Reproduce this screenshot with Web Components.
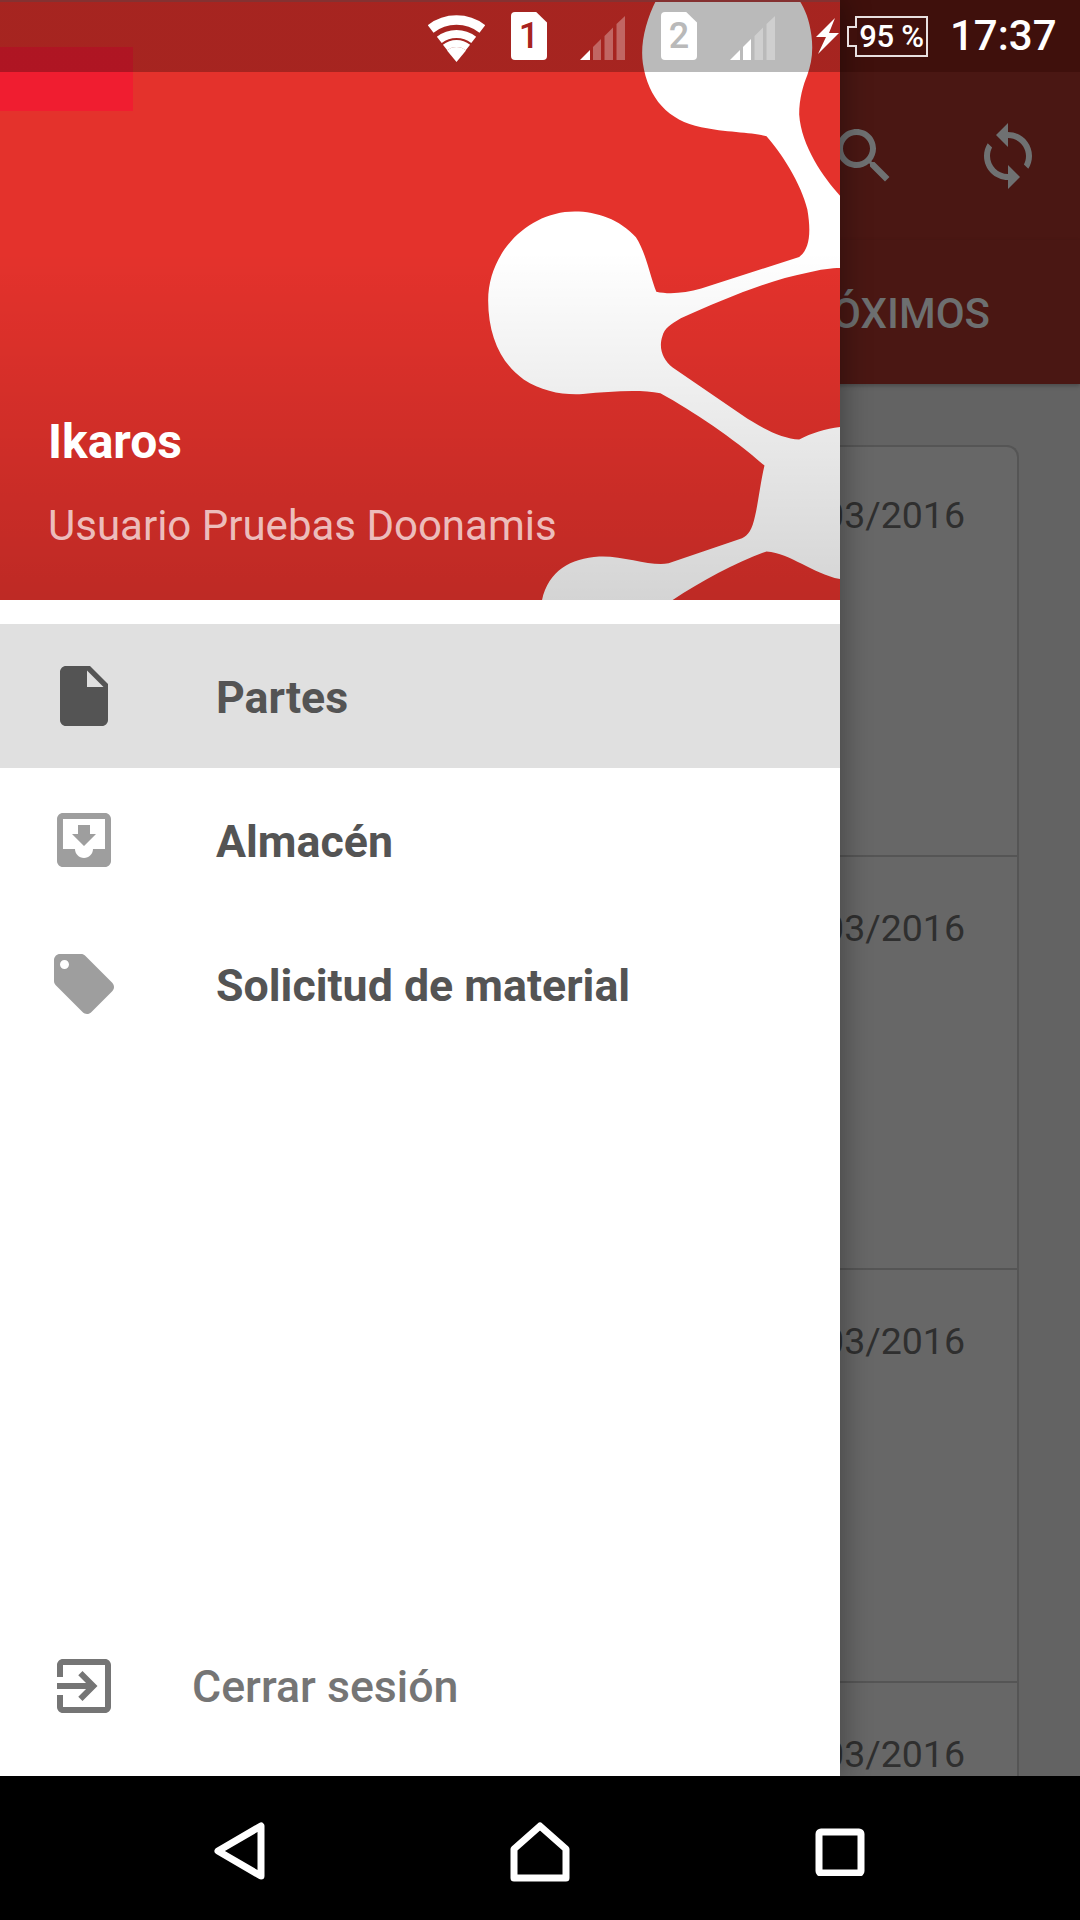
<!DOCTYPE html>
<html lang="es">
<head>
<meta charset="utf-8">
<title>Ikaros</title>
<style>
  html, body { margin: 0; background: #000; }
</style>
</head>
<body>
<phone-screen>
  <back-page slot="page">
    <date-card first>03/2016</date-card>
    <date-card>03/2016</date-card>
    <date-card>03/2016</date-card>
    <date-card>03/2016</date-card>
  </back-page>
  <nav-drawer slot="drawer">
    <drawer-header slot="header" name="Ikaros" user="Usuario Pruebas Doonamis"></drawer-header>
    <drawer-item icon="file" active>Partes</drawer-item>
    <drawer-item icon="inbox">Almacén</drawer-item>
    <drawer-item icon="tag">Solicitud de material</drawer-item>
    <drawer-item slot="footer" icon="exit" plain>Cerrar sesión</drawer-item>
  </nav-drawer>
  <status-bar slot="status"></status-bar>
  <nav-bar slot="nav"></nav-bar>
</phone-screen>

<script>
const ICONS = {
  file: "M6 2c-1.1 0-2 .9-2 2v16c0 1.1.9 2 2 2h12c1.1 0 2-.9 2-2V8l-6-6H6zm7 7V3.5L18.5 9H13z",
  inbox: "M19 3H4.99c-1.11 0-1.98.9-1.98 2L3 19c0 1.1.88 2 1.99 2H19c1.1 0 2-.9 2-2V5c0-1.1-.9-2-2-2zm0 12h-4c0 1.66-1.35 3-3 3s-3-1.34-3-3H4.99V5H19v10zm-3-5h-2V7h-4v3H8l4 4 4-4z",
  tag: "M21.41 11.58l-9-9C12.05 2.22 11.55 2 11 2H4c-1.1 0-2 .9-2 2v7c0 .55.22 1.05.59 1.42l9 9c.36.36.86.58 1.41.58.55 0 1.05-.22 1.41-.59l7-7c.37-.36.59-.86.59-1.41 0-.55-.23-1.06-.59-1.42zM5.5 7C4.67 7 4 6.33 4 5.5S4.67 4 5.5 4 7 4.67 7 5.5 6.33 7 5.5 7z",
  exit: "M10.09 15.59L11.5 17l5-5-5-5-1.41 1.41L12.67 11H3v2h9.67l-2.58 2.59zM19 3H5c-1.11 0-2 .9-2 2v4h2V5h14v14H5v-4H3v4c0 1.1.89 2 2 2h14c1.1 0 2-.9 2-2V5c0-1.1-.9-2-2-2z",
  search: "M15.5 14h-.79l-.28-.27C15.41 12.59 16 11.11 16 9.5 16 5.91 13.09 3 9.5 3S3 5.91 3 9.5 5.91 16 9.5 16c1.61 0 3.09-.59 4.23-1.57l.27.28v.79l5 4.99L20.49 19l-4.99-5zm-6 0C7.01 14 5 11.99 5 9.5S7.01 5 9.5 5 14 7.01 14 9.5 11.99 14 9.5 14z",
  sync: "M12 4V1L8 5l4 4V6c3.31 0 6 2.69 6 6 0 1.01-.25 1.97-.7 2.8l1.46 1.46C19.54 15.03 20 13.57 20 12c0-4.42-3.58-8-8-8zm0 14c-3.31 0-6-2.69-6-6 0-1.01.25-1.97.7-2.8L5.24 7.74C4.46 8.97 4 10.43 4 12c0 4.42 3.58 8 8 8v3l4-4-4-4v3z"
};

class PhoneScreen extends HTMLElement {
  constructor() {
    super();
    this.attachShadow({ mode: "open" });
  }
  connectedCallback() {
    this.shadowRoot.innerHTML = `
      <style>
        :host {
          display: flex;
          flex-direction: column;
          position: relative;
          width: 1080px;
          height: 1920px;
          overflow: hidden;
          background: #000;
          font-family: Roboto, "Liberation Sans", sans-serif;
        }
        .main { position: relative; height: 1776px; overflow: hidden; }
        .over { position: absolute; top: 0; left: 0; }
      </style>
      <div class="main">
        <slot name="page"></slot>
        <div class="over"><slot name="drawer"></slot></div>
        <div class="over"><slot name="status"></slot></div>
      </div>
      <slot name="nav"></slot>
    `;
  }
}

class SimBadge extends HTMLElement {
  constructor() {
    super();
    this.attachShadow({ mode: "open" });
  }
  connectedCallback() {
    this.shadowRoot.innerHTML = `
      <style>
        :host {
          display: flex;
          align-items: center;
          justify-content: center;
          width: 36px;
          height: 48px;
          background: #fff;
          border-radius: 4px;
          clip-path: polygon(0 0, 70% 0, 100% 22%, 100% 100%, 0 100%);
          color: var(--digit, #a82320);
          font: 500 36px/1 Roboto, sans-serif;
        }
      </style>
      ${this.getAttribute("num")}
    `;
  }
}

class SignalBars extends HTMLElement {
  constructor() {
    super();
    this.attachShadow({ mode: "open" });
  }
  connectedCallback() {
    const lit = Number(this.getAttribute("lit") ?? 1);
    const shapes = [
      "0,44 10,34 10,44",
      "13,44 13,31 21,23 21,44",
      "24.5,44 24.5,20 33,11.5 33,44",
      "36.5,44 36.5,8 45,0 45,44"
    ];
    const polys = shapes.map((p, i) =>
      `<polygon points="${p}" fill="#fff" fill-opacity="${i < lit ? 1 : 0.3}"/>`).join("");
    this.shadowRoot.innerHTML = `
      <style>
        :host { display: block; width: 45px; height: 44px; }
        svg { display: block; }
      </style>
      <svg width="45" height="44" viewBox="0 0 45 44">${polys}</svg>
    `;
  }
}

class StatusBar extends HTMLElement {
  constructor() {
    super();
    this.attachShadow({ mode: "open" });
  }
  connectedCallback() {
    this.shadowRoot.innerHTML = `
      <style>
        :host {
          display: flex;
          align-items: center;
          justify-content: flex-end;
          box-sizing: border-box;
          width: 1080px;
          height: 72px;
          padding-right: 28px;
          background:
            linear-gradient(#853131, #853131) 0 0 / 840px 2px no-repeat,
            linear-gradient(to right, rgba(0,0,0,.27) 840px, transparent 840px);
          color: #fff;
        }
        svg { display: block; flex: none; }
        .wifi { margin-top: 5px; }
        sim-badge { margin-left: 26px; }
        signal-bars { margin-left: 33px; margin-top: 4px; }
        .two { margin-left: 36px; --digit: #b9b9b9; }
        .bolt { margin-left: 41px; }
        .battery {
          position: relative;
          box-sizing: border-box;
          display: flex;
          align-items: center;
          justify-content: center;
          width: 73px;
          height: 41px;
          margin-left: 16px;
          margin-top: 1px;
          border: 2px solid #e8e0e0;
          font: 500 31px/1 Roboto, sans-serif;
          letter-spacing: -.3px;
          white-space: nowrap;
        }
        .battery::before {
          content: "";
          position: absolute;
          left: -10px;
          top: 8px;
          width: 10px;
          height: 21px;
          box-sizing: border-box;
          background: #3f100c;
          border: 2px solid #e8e0e0;
          border-right: 0;
        }
        .time { margin-left: 22px; font: 500 42px/1 Roboto, sans-serif; width: 102px; }
      </style>
      <svg class="wifi" width="57" height="47" viewBox="0 0 57 47" fill="none" stroke="#fff">
        <path d="M2.6 13.9A42 42 0 0 1 54.4 13.9" stroke-width="9.5"/>
        <path d="M11.3 24.9A28 28 0 0 1 45.7 24.9" stroke-width="8"/>
        <path d="M17.1 32.4A18.5 18.5 0 0 1 39.9 32.4" stroke-width="7"/>
        <path d="M28.5 47L19 35.5A15 15 0 0 1 38 35.5Z" fill="#fff" stroke="none"/>
      </svg>
      <sim-badge num="1"></sim-badge>
      <signal-bars lit="1"></signal-bars>
      <sim-badge class="two" num="2"></sim-badge>
      <signal-bars lit="2"></signal-bars>
      <svg class="bolt" width="23" height="36" viewBox="0 0 23 36" fill="#fff">
        <path d="M19 0L0 19H10L2 36L23 15H13Z"/>
      </svg>
      <div class="battery">95 %</div>
      <div class="time">17:37</div>
    `;
  }
}

class BackPage extends HTMLElement {
  constructor() {
    super();
    this.attachShadow({ mode: "open" });
  }
  connectedCallback() {
    this.shadowRoot.innerHTML = `
      <style>
        :host {
          display: flex;
          flex-direction: column;
          width: 1080px;
          height: 1776px;
          overflow: hidden;
          background: #636363;
        }
        .status { height: 72px; flex: none; background: #3f100c; }
        .toolbar {
          display: flex;
          justify-content: flex-end;
          align-items: center;
          height: 168px;
          flex: none;
          background: #4a1713;
        }
        .action { display: flex; justify-content: center; width: 144px; }
        svg { display: block; fill: #6f7172; }
        .tabs {
          display: flex;
          justify-content: flex-end;
          align-items: center;
          height: 144px;
          flex: none;
          box-sizing: border-box;
          padding: 4px 90px 0 0;
          background: #4a1713;
          box-shadow: 0 2px 4px rgba(0,0,0,.25);
          position: relative;
          color: #6d6f70;
          font: 500 42px/1 Roboto, sans-serif;
        }
        .list { display: flex; flex-direction: column; padding: 61px 61px 0 0; }
      </style>
      <div class="status"></div>
      <div class="toolbar">
        <div class="action"><svg width="72" height="72" viewBox="0 0 24 24"><path d="${ICONS.search}"/></svg></div>
        <div class="action"><svg width="72" height="72" viewBox="0 0 24 24"><path d="${ICONS.sync}"/></svg></div>
      </div>
      <div class="tabs">ÓXIMOS</div>
      <div class="list"><slot></slot></div>
    `;
  }
}

class DateCard extends HTMLElement {
  constructor() {
    super();
    this.attachShadow({ mode: "open" });
  }
  connectedCallback() {
    this.shadowRoot.innerHTML = `
      <style>
        :host {
          display: flex;
          justify-content: flex-end;
          box-sizing: border-box;
          height: 413px;
          padding: 52px 52px 0 0;
          background: #676767;
          border-right: 2px solid #555;
          border-top: 2px solid #555;
          color: #2f2f2f;
          font: 400 37.5px/38px Roboto, sans-serif;
        }
        :host([first]) { height: 410px; padding-top: 49px; border-top-right-radius: 12px; }
        :host(:last-child) { height: 96px; }
      </style>
      <slot></slot>
    `;
  }
}

class NavDrawer extends HTMLElement {
  constructor() {
    super();
    this.attachShadow({ mode: "open" });
  }
  connectedCallback() {
    this.shadowRoot.innerHTML = `
      <style>
        :host {
          display: flex;
          flex-direction: column;
          width: 840px;
          height: 1776px;
          background: #fff;
          box-shadow: 4px 0 26px rgba(0,0,0,.32);
        }
        .items { display: flex; flex-direction: column; flex: 1; padding-top: 24px; }
        .foot { padding-bottom: 18px; }
      </style>
      <slot name="header"></slot>
      <div class="items"><slot></slot></div>
      <div class="foot"><slot name="footer"></slot></div>
    `;
  }
}

class DrawerHeader extends HTMLElement {
  constructor() {
    super();
    this.attachShadow({ mode: "open" });
  }
  connectedCallback() {
    this.shadowRoot.innerHTML = `
      <style>
        :host {
          display: flex;
          flex-direction: column;
          justify-content: flex-end;
          box-sizing: border-box;
          position: relative;
          height: 600px;
          padding: 0 0 44px 48px;
          overflow: hidden;
          background: #e4322c;
          color: #fff;
          font-family: Roboto, sans-serif;
        }
        .mark { position: absolute; top: 0; left: 440px; display: block; }
        .shade {
          position: absolute;
          inset: 0;
          background: linear-gradient(transparent 42%, rgba(0,0,0,.17));
        }
        .tab {
          position: absolute;
          top: 47px;
          left: 0;
          width: 133px;
          height: 64px;
          background: #f01d30;
        }
        .name { position: relative; font-size: 48px; line-height: 60px; font-weight: 700; margin-bottom: 24px; }
        .user { position: relative; font-size: 42px; line-height: 60px; color: rgba(255,255,255,.7); }
      </style>
      <svg class="mark" width="400" height="600" viewBox="0 0 980 1518" preserveAspectRatio="none">
        <path fill="#fff" d="M530 0 C505 50 490 110 497 160 C510 250 560 305 640 322 C700 335 770 335 800 345
          C835 385 885 465 900 530 C910 590 905 630 880 650 L640 730 C600 742 560 745 530 738
          C515 700 505 640 480 600 C440 555 385 535 330 535 C215 535 118 640 118 760
          C118 850 150 920 205 960 C250 990 300 1000 350 997 C420 990 490 985 540 995
          C620 1040 720 1110 795 1178 C785 1220 780 1270 772 1305 C765 1340 755 1355 740 1362
          L560 1425 C520 1435 450 1405 390 1408 C320 1412 265 1445 250 1518 L570 1518
          C640 1470 730 1420 800 1395 C860 1400 910 1450 980 1465 L980 1080
          C945 1085 910 1095 880 1112 C840 1110 790 1085 740 1050 L570 930 C545 910 535 880 545 850
          C550 830 565 820 590 805 C690 760 800 710 900 690 C930 682 960 678 980 678 L980 495
          C940 450 885 370 880 290 C880 250 890 215 900 190 C910 160 915 130 910 90 C905 50 895 25 880 0 Z"/>
      </svg>
      <div class="shade"></div>
      <div class="tab"></div>
      <div class="name">${this.getAttribute("name")}</div>
      <div class="user">${this.getAttribute("user")}</div>
    `;
  }
}

class DrawerItem extends HTMLElement {
  constructor() {
    super();
    this.attachShadow({ mode: "open" });
  }
  connectedCallback() {
    const d = ICONS[this.getAttribute("icon")];
    this.shadowRoot.innerHTML = `
      <style>
        :host {
          display: flex;
          align-items: center;
          box-sizing: border-box;
          height: 144px;
          padding-left: 48px;
          color: #545454;
          font: 700 44.7px/1 Roboto, sans-serif;
          --icon: #9e9e9e;
        }
        :host([active]) { background: #e0e0e0; --icon: #545454; }
        :host([plain]) { color: #757575; font-weight: 500; --icon: #757575; }
        svg { display: block; flex: none; fill: var(--icon); margin-right: 96px; }
        :host([plain]) svg { margin-right: 72px; }
        .label { padding-top: 4px; }
        :host([plain]) .label { padding-top: 2px; }
      </style>
      <svg width="72" height="72" viewBox="0 0 24 24"><path d="${d}"/></svg>
      <div class="label"><slot></slot></div>
    `;
  }
}

class NavBar extends HTMLElement {
  constructor() {
    super();
    this.attachShadow({ mode: "open" });
  }
  connectedCallback() {
    this.shadowRoot.innerHTML = `
      <style>
        :host {
          display: grid;
          grid-template-columns: repeat(3, 1fr);
          height: 144px;
          background: #000;
          width: 1080px;
        }
        svg { display: block; margin: 46px auto 0; fill: none; stroke: #fff; stroke-width: 7; stroke-linejoin: round; }
        .back { transform: translateX(60px); }
        .recent { transform: translate(-60px, 4px); }
      </style>
      <svg class="back" width="52" height="58" viewBox="0 0 52 58"><path d="M4 29L47 4V54Z"/></svg>
      <svg width="60" height="60" viewBox="0 0 60 60"><path d="M30 4L56 27V56H4V27Z"/></svg>
      <svg class="recent" width="50" height="50" viewBox="0 0 50 50"><rect x="4" y="6" width="42" height="41" rx="2"/></svg>
    `;
  }
}

customElements.define("phone-screen", PhoneScreen);
customElements.define("sim-badge", SimBadge);
customElements.define("signal-bars", SignalBars);
customElements.define("status-bar", StatusBar);
customElements.define("back-page", BackPage);
customElements.define("date-card", DateCard);
customElements.define("nav-drawer", NavDrawer);
customElements.define("drawer-header", DrawerHeader);
customElements.define("drawer-item", DrawerItem);
customElements.define("nav-bar", NavBar);
</script>
</body>
</html>
